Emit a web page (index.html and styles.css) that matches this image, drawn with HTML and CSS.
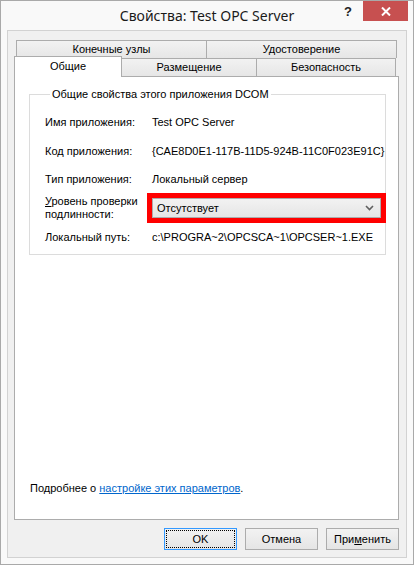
FILE: index.html
```html
<!DOCTYPE html>
<html lang="ru">
<head>
  <meta http-equiv="Content-Type" content="text/html;charset=UTF-8">
  <meta name="viewport" content="width=device-width, initial-scale=1.0">
  <link rel="stylesheet" href="styles.css">
</head>
<body>
  <div class="window">
    <div class="titlebar">
      <div></div>
      <div class="title">Свойства: Test OPC Server</div>
      <div class="controls">
        <span class="help">?</span>
        <span class="close">
          <svg width="10" height="9" viewBox="0 0 10 9">
            <path d="M1 0.5 L9 8.5 M9 0.5 L1 8.5" stroke="#fff" stroke-width="2" fill="none"/>
          </svg>
        </span>
      </div>
    </div>

    <div class="client">
      <div class="tabs">
        <div class="tab-row upper">
          <div class="tab">Конечные узлы</div>
          <div class="tab">Удостоверение</div>
        </div>
        <div class="tab-row lower">
          <div class="tab active">Общие</div>
          <div class="tab placement">Размещение</div>
          <div class="tab security">Безопасность</div>
        </div>
      </div>

      <div class="panel">
        <fieldset class="group">
          <legend>Общие свойства этого приложения DCOM</legend>
          <div class="props">
            <div class="label">Имя приложения:</div>
            <div class="value">Test OPC Server</div>

            <div class="label">Код приложения:</div>
            <div class="value">{CAE8D0E1-117B-11D5-924B-11C0F023E91C}</div>

            <div class="label">Тип приложения:</div>
            <div class="value">Локальный сервер</div>

            <div class="label"><u>У</u>ровень проверки<br>подлинности:</div>
            <div class="value">
              <div class="combo-mark">
                <div class="combo">
                  <span>Отсутствует</span>
                  <svg width="9" height="6" viewBox="0 0 9 6">
                    <path d="M1 1 L4.5 4.5 L8 1" stroke="#606060" stroke-width="1.6" fill="none"/>
                  </svg>
                </div>
              </div>
            </div>

            <div class="label">Локальный путь:</div>
            <div class="value">c:\PROGRA~2\OPCSCA~1\OPCSER~1.EXE</div>
          </div>
        </fieldset>

        <p class="more">Подробнее о <a href="#">настройке этих параметров</a>.</p>
      </div>

      <div class="buttons">
        <button class="btn default"><span class="focus">OK</span></button>
        <button class="btn"><span>Отмена</span></button>
        <button class="btn"><span>При<u>м</u>енить</span></button>
      </div>
    </div>
  </div>
</body>
</html>
```

FILE: styles.css
```css
* {
  margin: 0;
  padding: 0;
  box-sizing: border-box;
}

html, body {
  width: 414px;
  height: 565px;
  overflow: hidden;
}

body {
  font-family: "Liberation Sans", Arial, sans-serif;
  font-size: 11px;
  color: #000;
  background: #fff;
}

.window {
  width: 414px;
  height: 565px;
  border: 1px solid #a9a9a9;
  background: #f9f9f9;
  display: flex;
  flex-direction: column;
}

/* title bar */
.titlebar {
  height: 29px;
  flex: none;
  display: grid;
  grid-template-columns: 1fr auto 1fr;
}

.title {
  font-family: "Noto Sans", sans-serif;
  font-size: 14px;
  line-height: 29px;
  color: #1a1a1a;
  white-space: nowrap;
}

.controls {
  justify-self: end;
  display: flex;
  align-items: flex-start;
  padding-right: 5px;
}

.help {
  font-family: "Liberation Sans", Arial, sans-serif;
  font-weight: bold;
  font-size: 13px;
  line-height: 22px;
  color: #222;
  margin-right: 11px;
}

.close {
  width: 45px;
  height: 20px;
  background: #c75050;
  display: flex;
  justify-content: center;
  align-items: center;
}

/* client area */
.client {
  flex: 1;
  margin: 0 6px 6px 6px;
  border: 1px solid #d2d2d2;
  background: #f0f0f0;
  padding: 9px 7px 7px 6px;
  display: flex;
  flex-direction: column;
}

.tabs {
  padding: 0 2px;
}

.tab-row {
  display: flex;
  height: 18px;
}

.tab {
  height: 18px;
  border-top: 1px solid #acacac;
  border-right: 1px solid #acacac;
  background: linear-gradient(#f2f2f2, #e6e6e6);
  text-align: center;
  line-height: 17px;
  white-space: nowrap;
}

.tab:first-child {
  border-left: 1px solid #acacac;
}

.upper .tab {
  flex: 1;
}

.tab.active {
  width: 108px;
  height: 21px;
  margin: -2px -2px 0 -2px;
  background: #fff;
  position: relative;
  z-index: 1;
  line-height: 18px;
}

.tab.placement {
  width: 137px;
  padding-left: 2px;
}

.tab.security {
  width: 139px;
}

.panel {
  flex: 1;
  background: #fff;
  border: 1px solid #acacac;
  padding: 10px 12px 24px 14px;
  display: flex;
  flex-direction: column;
}

/* group box */
.group {
  border: 1px solid #dcdcdc;
  padding: 6px 0 3px 15px;
  min-width: 0;
}

.group legend {
  margin-left: 5px;
  padding: 0 2px;
  line-height: 14px;
}

.props {
  display: grid;
  grid-template-columns: 107px 1fr;
  grid-template-rows: 30px 28px 28px 30px 28px;
  align-items: center;
  line-height: 13px;
}

.value {
  white-space: nowrap;
}

.combo-mark {
  width: 239px;
  margin-left: -5px;
  border: 5px solid #f00;
}

.combo {
  height: 20px;
  border: 1px solid #acacac;
  background: linear-gradient(#f2f2f2, #e5e5e5);
  padding: 0 6px 0 4px;
  display: flex;
  justify-content: space-between;
  align-items: center;
}

.more {
  margin-top: auto;
  padding-left: 1px;
  line-height: 14px;
}

.more a {
  color: #0066cc;
}

/* dialog buttons */
.buttons {
  margin-top: 8px;
  display: flex;
  justify-content: flex-end;
  gap: 8px;
}

.btn {
  width: 73px;
  height: 22px;
  border: 1px solid #acacac;
  background: linear-gradient(#f2f2f2, #e5e5e5);
  font-family: "Liberation Sans", Arial, sans-serif;
  font-size: 11px;
  color: #000;
  padding: 1px;
}

.btn span {
  display: block;
  height: 18px;
  line-height: 16px;
  border: 1px solid transparent;
}

.btn.default {
  border-color: #3399ff;
}

.btn .focus {
  border: 1px dotted #000;
}
```
